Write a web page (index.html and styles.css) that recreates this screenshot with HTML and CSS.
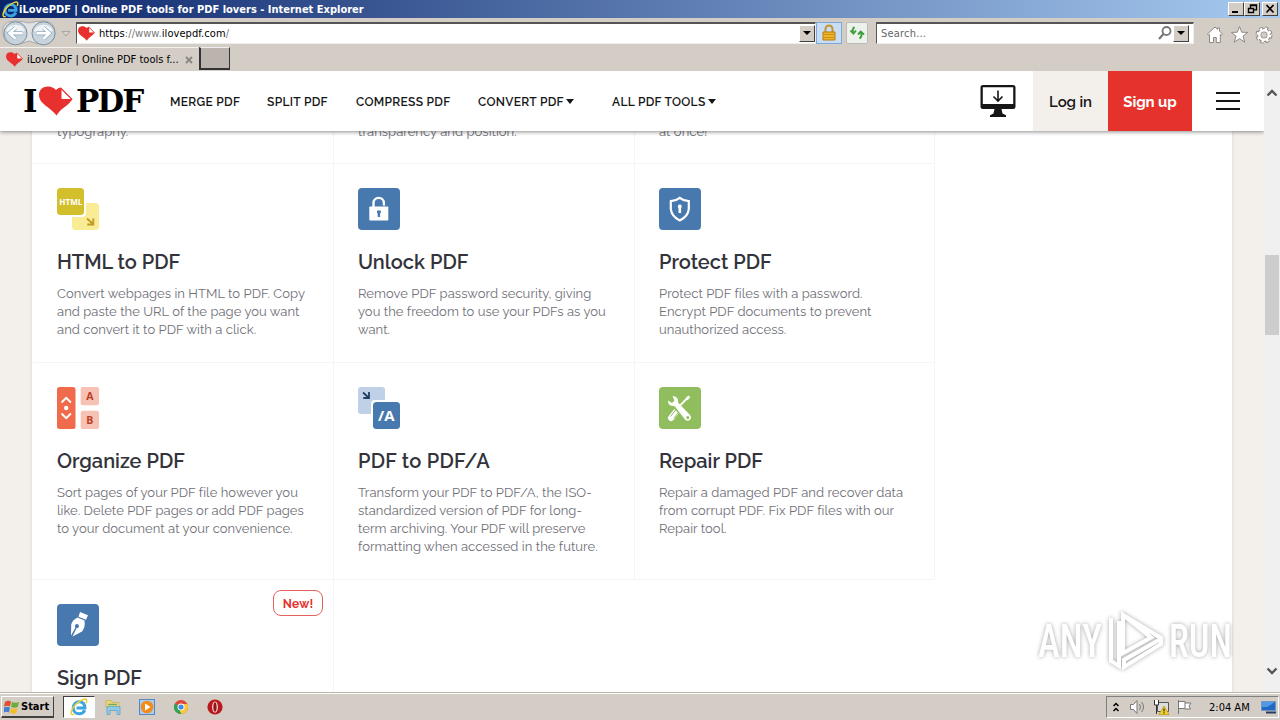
FILE: index.html
```html
<!DOCTYPE html>
<html lang="en">
<head>
<meta charset="UTF-8">
<title>iLovePDF | Online PDF tools for PDF lovers</title>
<link rel="stylesheet" href="styles.css">
</head>
<body>
<svg width="0" height="0" class="defs">
    <defs>
        <symbol id="ie" viewBox="0 0 18 18">
            <path d="M14.800 12.200C13.500 14.600 11.500 15.800 9.200 15.800c-3.600 0-6-2.600-6-6s2.700-6 6-6c3.700 0 5.800 2.600 5.700 6.200H6.500" fill="none" stroke="#3aa5e2" stroke-width="3"/>
            <path d="M4 16.300C-1 18 1 10.500 6 6S16.500-.5 16.700 2.500c.1 1-.3 2-.8 2.800" fill="none" stroke="#e9cf38" stroke-width="1.600"/>
        </symbol>
        <symbol id="heart" viewBox="0 0 34 30">
            <path d="M17.500 29.500C12 21.500 0 18 0 9 0 3.500 4 .5 9 .5c3.500 0 6 1.200 8 3.500 1.500-1.500 3-2.300 5-2.500L33.500 13c-3 6-11.500 9-16 16.500z" fill="#e8302e"/>
            <path d="M22 2.700v10.800h10.800z" fill="#fff" stroke="#e8302e" stroke-width="1"/>
        </symbol>
    </defs>
</svg>

<!-- Browser window -->
<div class="titlebar">
    <svg class="ie-icon"><use href="#ie"/></svg>
    <span class="win-title">iLovePDF | Online PDF tools for PDF lovers - Internet Explorer</span>
    <div class="win-btns">
        <span class="win-btn"><svg width="13" height="10"><path d="M2 8h6" stroke="#000" stroke-width="2"/></svg></span>
        <span class="win-btn"><svg width="13" height="10"><path d="M4.500 4V.9h6v5H8M4 1.500h7M2.500 4.500h5v4h-5zM2 4.500h6" fill="none" stroke="#000" stroke-width="1.400"/></svg></span>
        <span class="win-btn last"><svg width="13" height="10"><path d="M2.500 1l7 7.500M9.500 1l-7 7.500" stroke="#000" stroke-width="1.700"/></svg></span>
    </div>
</div>
<div class="toolbar">
    <svg class="history" width="74" height="29" viewBox="0 0 74 29">
        <path d="M3 9q3-6 12-6 7 0 14 2 7-2 14-2 12 0 12 12 0 11-12 11-7 0-14-3-7 3-14 3Q3 26 3 15z" fill="#dfe1e2" stroke="#a9aaab"/>
        <circle cx="15.500" cy="15.300" r="11.500" fill="#c7d4de" stroke="#818f9b"/>
        <circle cx="43.500" cy="15.300" r="11.500" fill="#c7d4de" stroke="#818f9b"/>
        <path d="M6 13a10 9 0 0 1 19 0q-9 4-19 0zM34 13a10 9 0 0 1 19 0q-9 4-19 0z" fill="#edf3f6"/>
        <path d="M22.500 15.300H9.500m6-5.500-6 5.500 6 5.500M36.500 15.300h13m-6-5.500 6 5.500-6 5.500" fill="none" stroke="#8fa9bd" stroke-width="4"/>
        <path d="M22.500 15.300H9.500m6-5.500-6 5.500 6 5.500M36.500 15.300h13m-6-5.500 6 5.500-6 5.500" fill="none" stroke="#fff" stroke-width="2.600"/>
        <path d="M62 13.500h8l-4 4.500z" fill="#d9d4cd" stroke="#aaa69f"/>
    </svg>
    <div class="address">
        <svg class="fav"><use href="#heart"/></svg>
        <span class="url">https<i>://www.</i>ilovepdf.com<i>/</i></span>
        <span class="drop"></span>
    </div>
    <span class="tool-btn lock">
        <svg width="18" height="18"><path d="M5.500 8V5a3.500 3.500 0 0 1 7 0v3" fill="none" stroke="#c89429" stroke-width="2"/><path d="M3 8h12v8H3z" fill="#f1b726" stroke="#b47b14"/><path d="M3.500 10.500h11M3.500 13.500h11" stroke="#c98c19"/></svg>
    </span>
    <span class="tool-btn refresh">
        <svg width="18" height="18"><path d="M6.500 3Q4 5 5 9M2.500 6.500l3 3 2.500-3M11.500 14.500q3-2 1.500-6M10 10.500l2.700-3 3.300 3" fill="none" stroke="#3c9d3b" stroke-width="1.900"/></svg>
    </span>
    <div class="search">
        <span>Search...</span>
        <svg width="16" height="16"><circle cx="9.500" cy="6" r="4" fill="none" stroke="#777" stroke-width="1.800"/><path d="M6.500 9l-4.500 5" stroke="#777" stroke-width="2.200"/></svg>
        <span class="drop"></span>
    </div>
    <svg class="ie-tools" width="70" height="22" viewBox="0 0 70 22" fill="#fff" stroke="#8d8983" stroke-width="1">
        <path d="M1.500 10 9 3l2.500 2.300V4h2v3.200l3 2.800-1.200 1.200-1-.7v8h-4v-5H7.500v5h-4v-8l-1 .8z"/>
        <path d="M33.500 2.500l2.200 5.700 6 .2-4.700 3.700 1.700 6-5.200-3.400-5.200 3.400 1.700-6-4.700-3.700 6-.2z"/>
        <circle cx="58" cy="11" r="6.500" fill="none" stroke="#8d8983" stroke-width="4" stroke-dasharray="3.100 2"/>
        <circle cx="58" cy="11" r="4.800" fill="none" stroke="#8d8983" stroke-width="4.200"/>
        <circle cx="58" cy="11" r="6.300" fill="none" stroke="#fff" stroke-width="2.400" stroke-dasharray="2.300 2.650"/>
        <circle cx="58" cy="11" r="4.700" fill="none" stroke="#fff" stroke-width="2.400"/>
    </svg>
</div>
<div class="tabs">
    <div class="tab">
        <svg class="fav"><use href="#heart"/></svg>
        <span>iLovePDF | Online PDF tools f...</span>
        <svg class="tab-x" width="8" height="8"><path d="M1 1l6 6M7 1L1 7" stroke="#8a8681" stroke-width="1.800"/></svg>
    </div>
    <span class="new-tab"></span>
</div>

<!-- Web page -->
<div class="viewport">
    <div class="page">
        <header class="header">
            <div class="brand">
                <b>I</b><svg class="brand-heart"><use href="#heart"/></svg><b class="pdf">PDF</b>
            </div>
            <nav class="menu">
                <a class="m1">MERGE PDF</a>
                <a class="m2">SPLIT PDF</a>
                <a class="m3">COMPRESS PDF</a>
                <a class="m4">CONVERT PDF <i class="caret"></i></a>
                <a class="m5">ALL PDF TOOLS <i class="caret"></i></a>
            </nav>
            <svg class="desktop" width="36" height="34" viewBox="0 0 36 34">
                <path d="M3 1h30q2.500 0 2.500 2.500v19Q35.500 25 33 25H3Q.5 25 .5 22.500v-19Q.5 1 3 1zM2.800 3.200V20h30.400V3.200z" fill="#161616" fill-rule="evenodd"/>
                <path d="M14.500 25h7l1 4.500 3.500 1.800V33H10v-1.700l3.500-1.800z" fill="#161616"/>
                <path d="M18 6.500v10.500m-4.500-4.500 4.500 4.500 4.500-4.500" fill="none" stroke="#161616" stroke-width="1.600"/>
            </svg>
            <a class="login">Log in</a>
            <a class="signup">Sign up</a>
            <svg class="burger" width="24" height="20"><path d="M0 2h24M0 10h24M0 18h24" stroke="#161616" stroke-width="2"/></svg>
        </header>
        <main class="tools">
            <div class="card cut"><p>typography.</p></div>
            <div class="card cut"><p>transparency and position.</p></div>
            <div class="card cut"><p>at once!</p></div>

            <div class="card">
                <svg class="icon" viewBox="0 0 42 42">
                    <rect x="15" y="15" width="27" height="27" rx="3.500" fill="#f9ec94"/>
                    <rect x="-2" y="-2" width="31" height="31" rx="4" fill="#fff"/>
                    <rect width="27" height="27" rx="3.500" fill="#d3bf2c"/>
                    <text x="2.300" y="16.500" textLength="23" lengthAdjust="spacingAndGlyphs" font-size="8" fill="#fff">HTML</text>
                    <path d="M30 30.500l6 5.500m.3-5.500v6h-6" fill="none" stroke="#c19a22" stroke-width="1.800"/>
                </svg>
                <h3>HTML to PDF</h3>
                <p>Convert webpages in HTML to PDF. Copy<br>and paste the URL of the page you want<br>and convert it to PDF with a click.</p>
            </div>
            <div class="card">
                <svg class="icon" viewBox="0 0 42 42">
                    <rect width="42" height="42" rx="4" fill="#4879ae"/>
                    <path d="M15.500 20v-5a5.200 5.200 0 0 1 10.400 0v2.500" fill="none" stroke="#fff" stroke-width="2.300"/>
                    <rect x="11.300" y="18.500" width="19" height="14" rx=".8" fill="#fff"/>
                    <path d="M19 22.500h3.800v2.700h-.7v3.800h-2.400v-3.800h-.7z" fill="#4879ae"/>
                </svg>
                <h3>Unlock PDF</h3>
                <p>Remove PDF password security, giving<br>you the freedom to use your PDFs as you<br>want.</p>
            </div>
            <div class="card">
                <svg class="icon" viewBox="0 0 42 42">
                    <rect width="42" height="42" rx="4" fill="#4879ae"/>
                    <path d="M20.800 9.800q4 3.200 9 3.400v8q-.8 7.500-9 11.200-8.200-3.700-9-11.200v-8q5-.2 9-3.400z" fill="none" stroke="#fff" stroke-width="2.200"/>
                    <path d="M20.800 16.500a2 2 0 0 1 1.300 3.500v5h-2.600v-5a2 2 0 0 1 1.300-3.500z" fill="#fff"/>
                </svg>
                <h3>Protect PDF</h3>
                <p>Protect PDF files with a password.<br>Encrypt PDF documents to prevent<br>unauthorized access.</p>
            </div>

            <div class="card">
                <svg class="icon" viewBox="0 0 42 42">
                    <rect width="18.500" height="42" rx="2.500" fill="#f06b4c"/>
                    <path d="M4.500 15.500l4.700-4.700 4.700 4.700M4.500 26.500l4.700 4.700 4.700-4.700" fill="none" stroke="#fff" stroke-width="1.900"/>
                    <circle cx="9.200" cy="21" r="2.200" fill="#fff"/>
                    <rect x="23.700" width="18.300" height="18.300" rx="2" fill="#f7c2b3"/>
                    <rect x="23.700" y="23.700" width="18.300" height="18.300" rx="2" fill="#f7c2b3"/>
                    <text x="32.800" y="13" text-anchor="middle" font-size="10.500" fill="#bd3d27">A</text>
                    <text x="32.800" y="36.500" text-anchor="middle" font-size="10.500" fill="#bd3d27">B</text>
                </svg>
                <h3>Organize PDF</h3>
                <p>Sort pages of your PDF file however you<br>like. Delete PDF pages or add PDF pages<br>to your document at your convenience.</p>
            </div>
            <div class="card">
                <svg class="icon" viewBox="0 0 42 42">
                    <rect width="27" height="27" rx="3" fill="#c0d0e6"/>
                    <path d="M5 5.500l5.500 5M11 5v6H5.300" fill="none" stroke="#203f68" stroke-width="1.800"/>
                    <rect x="13" y="13" width="31" height="31" rx="4" fill="#fff"/>
                    <rect x="15" y="15" width="27" height="27" rx="3.500" fill="#4879ae"/>
                    <text x="20" y="34" textLength="16.500" lengthAdjust="spacingAndGlyphs" font-size="15" fill="#fff">/A</text>
                </svg>
                <h3 class="wide">PDF to PDF/A</h3>
                <p>Transform your PDF to PDF/A, the ISO-<br>standardized version of PDF for long-<br>term archiving. Your PDF will preserve<br>formatting when accessed in the future.</p>
            </div>
            <div class="card">
                <svg class="icon" viewBox="0 0 42 42">
                    <rect width="42" height="42" rx="4" fill="#90bd5d"/>
                    <path d="M21 18.500l7.500-7.500" stroke="#fff" stroke-width="1.800"/>
                    <path d="M26.500 11l3-2.500 1.700 1.700-2.500 3z" fill="#fff"/>
                    <path d="M19 22.500l-7 8.500" stroke="#fff" stroke-width="6" stroke-linecap="round"/>
                    <path d="M17 22.500l-5.500 7M20 25l-5 6" stroke="#90bd5d" stroke-width="1"/>
                    <path d="M14 15.500l15 15.500" stroke="#90bd5d" stroke-width="7"/>
                    <path d="M13.500 9q6 0 5.500 6.500l12 12.500q2 2.800 0 4.800t-4.800 0L15.500 19Q9 19.500 9 13.500l4 2.500 2.500-2.500z" fill="#fff"/>
                    <circle cx="28.800" cy="30.500" r="1.500" fill="#90bd5d"/>
                </svg>
                <h3>Repair PDF</h3>
                <p>Repair a damaged PDF and recover data<br>from corrupt PDF. Fix PDF files with our<br>Repair tool.</p>
            </div>

            <div class="card">
                <span class="badge">New!</span>
                <svg class="icon" viewBox="0 0 42 42">
                    <rect width="42" height="42" rx="4" fill="#4879ae"/>
                    <path d="M23 8l8 3.200-2 4.500-7.500-3zM20.500 13.500l7 3q1 7-2.500 11l-9.500 5 4.200-8.500a2 2 0 1 0-1.200-.6L14 31.500l.2-11q1-4.500 6.300-7z" fill="#fff"/>
                </svg>
                <h3>Sign PDF</h3>
            </div>
            <div class="card none"></div>
            <div class="card none"></div>
        </main>
    </div>
    <div class="scrollbar">
        <svg width="16" height="16"><path d="M3.500 10.500L8 6l4.500 4.500" fill="none" stroke="#555" stroke-width="2.300"/></svg>
        <span class="thumb"></span>
        <svg class="down" width="16" height="16"><path d="M3.500 5.500L8 10l4.500-4.500" fill="none" stroke="#555" stroke-width="2.300"/></svg>
    </div>
    <svg class="watermark" width="240" height="76" viewBox="0 0 240 76">
        <g class="wm">
            <text x="5" y="50" textLength="64" lengthAdjust="spacingAndGlyphs">ANY</text>
            <text x="136" y="50" textLength="63" lengthAdjust="spacingAndGlyphs">RUN</text>
            <g fill="none" stroke="#fff" stroke-width="4">
                <path d="M78 11v43l8 5V14"/>
                <path d="M90 8v38l28-15.500zM90 8l38 23v6L91 60v-7l35-20"/>
            </g>
        </g>
    </svg>
</div>

<div class="taskbar">
    <div class="start">
        <svg width="17" height="16"><path d="M1 3q3-2 6-.5L6 7.500Q3 6 0 7.500z" fill="#e34d30"/><path d="M8 3q4 1.500 7 0l-1.200 5q-3 1.500-6.800 0z" fill="#70ac3b"/><path d="M0 8.500q3-1.500 6 0L5 13.500q-3-1.500-5 0z" fill="#4180d2"/><path d="M7 9q3 1.500 6.500 0l-1.200 5q-3 1.500-6.300 0z" fill="#f2bd29"/></svg>
        <b>Start</b>
    </div>
    <div class="task active"><svg width="18" height="18"><use href="#ie"/></svg></div>
    <svg class="task-icon" width="18" height="18"><path d="M2 2.500h5l1 2h7v5H2z" fill="#f0d77b" stroke="#c7a94e" stroke-width=".7"/><path d="M3 8.500h13v8h-3v-4H6v4H3z" fill="#8ccbe6" stroke="#5b9dbd" stroke-width=".7"/><path d="M4 6.500h9" stroke="#6cad65" stroke-width="1.500"/></svg>
    <svg class="task-icon" width="18" height="18"><rect x="1.500" y="1.500" width="15" height="15" fill="#a8cff0" stroke="#5687c7"/><circle cx="9" cy="9" r="6.300" fill="#f18b1c"/><path d="M7 5.500l5.500 3.500L7 12.500z" fill="#fff"/></svg>
    <svg class="task-icon" width="18" height="18"><circle cx="9" cy="9" r="7" fill="#e04636"/><path d="M9 9L2.900 5.500A7 7 0 0 0 9 16z" fill="#31a354"/><path d="M9 9h7a7 7 0 0 1-7 7z" fill="#f7cb36"/><path d="M9 6h6.500l.5 3-5 6-3-1z" fill="#f7cb36"/><circle cx="9" cy="9" r="3.500" fill="#fff"/><circle cx="9" cy="9" r="2.600" fill="#4688ed"/></svg>
    <svg class="task-icon" width="18" height="18"><circle cx="9" cy="9" r="7.600" fill="#b9191d"/><ellipse cx="9" cy="9" rx="2.800" ry="5.600" fill="#fff"/><ellipse cx="9" cy="9" rx="1.700" ry="4.700" fill="#9c1115"/></svg>
    <div class="tray">
        <svg width="8" height="12"><path d="M1.500 5L4 2.500 6.500 5M1.500 10L4 7.500 6.500 10" fill="none" stroke="#000" stroke-width="1.500"/></svg>
        <svg class="snd" width="17" height="16"><path d="M1.500 5.500h3L8 1.500v13l-3.500-4h-3z" fill="#fff" stroke="#777"/><path d="M10.500 5q2 3 0 6M12.500 3q4 5 0 10" fill="none" stroke="#777"/></svg>
        <svg class="net" width="17" height="16"><path d="M4.500 3.500h11v9h-11z" fill="#ddd" stroke="#555"/><path d="M1.500 1v5h4V1M3.500 6v9" fill="#fff" stroke="#333"/><path d="M11 7l5 8.500H6z" fill="#f6d32b" stroke="#c09a12" stroke-width=".8"/><path d="M11 9.500v3M11 13.300v1.200" stroke="#222" stroke-width="1.200"/></svg>
        <svg class="flag" width="17" height="16"><path d="M2.500 1v14M3 2.500h6v7H3M9 4h6l-2 3 1.500 3H9" fill="#fff" stroke="#777"/></svg>
        <span class="clock">2:04 AM</span>
        <svg class="show" width="16" height="14"><path d="M.5 1.500h14v9H.5z" fill="#2369c4" stroke="#6f96c3"/><path d="M1 2h13L6 7H1z" fill="#5199e4"/><path d="M5 12.500h10" stroke="#273c60" stroke-width="2"/></svg>
    </div>
</div>
</body>
</html>
```
FILE: styles.css
```css
* {
    box-sizing: border-box;
}
body {
    margin: 0;
    width: 1280px;
    height: 720px;
    overflow: hidden;
    display: flex;
    flex-direction: column;
    background: #d4cdc5;
    font-family: "DejaVu Sans Condensed", "DejaVu Sans", sans-serif;
    font-stretch: condensed;
    font-size: 11px;
    color: #000;
}
svg {
    display: block;
    flex: none;
}
.defs {
    position: absolute;
}
i {
    font-style: normal;
}

/* window */
.titlebar {
    height: 18px;
    flex: none;
    display: flex;
    align-items: center;
    background: linear-gradient(to right, #0b256b, #a6caf0);
}
.ie-icon {
    width: 17px;
    height: 17px;
    margin-left: 2px;
}
.win-title {
    color: #fff;
    font-weight: bold;
    font-size: 11px;
    white-space: nowrap;
}
.win-btns {
    display: flex;
    margin-left: auto;
    margin-right: 2px;
}
.win-btn {
    width: 16px;
    height: 14px;
    padding: 1px;
    background: #d4cdc5;
    border: 1px solid;
    border-color: #fff #404040 #404040 #fff;
}
.win-btn.last {
    margin-left: 2px;
}
.toolbar {
    height: 29px;
    flex: none;
    display: flex;
    align-items: center;
}
.address, .search {
    display: flex;
    align-items: center;
    height: 22px;
    background: #fff;
    border: 1px solid;
    border-color: #555 #eee #eee #555;
    border-top-width: 2px;
}
.address {
    width: 740px;
    margin-left: 2px;
}
.fav {
    width: 17px;
    height: 15px;
}
.address .fav {
    margin-left: 1px;
}
.url {
    margin-left: 4px;
    letter-spacing: 0.07px;
}
.url i {
    color: #777;
}
.drop {
    width: 16px;
    height: 17px;
    margin-left: auto;
    background: #d4cdc5;
    border: 1px solid;
    border-color: #fff #404040 #404040 #fff;
    display: flex;
    align-items: center;
    justify-content: center;
}
.drop::after {
    content: "";
    border: 4px solid transparent;
    border-top-color: #000;
    border-bottom: 0;
}
.tool-btn {
    width: 26px;
    height: 22px;
    display: flex;
    align-items: center;
    justify-content: center;
    border: 1px solid #7da7d8;
    background: #c9def5;
}
.refresh {
    width: 22px;
    margin-left: 4px;
    border-color: #bbb;
    background: #edf1ec;
    border-radius: 2px;
}
.search {
    width: 318px;
    margin-left: 8px;
    padding-left: 4px;
    color: #666;
    letter-spacing: 0.2px;
}
.search svg {
    margin-left: auto;
}
.search .drop {
    margin-left: 0;
    margin-right: 4px;
}
.ie-tools {
    margin-left: 12px;
    margin-top: 5px;
}
.tabs {
    height: 24px;
    flex: none;
    display: flex;
    align-items: flex-start;
}
.tab {
    width: 198px;
    height: 24px;
    padding-left: 6px;
    display: flex;
    align-items: center;
    border-top: 1px solid #f4f2ee;
    white-space: nowrap;
}
.tab span {
    margin-left: 4px;
}
.tab-x {
    margin-left: 6px;
}
.new-tab {
    width: 31px;
    height: 23px;
    background: #bbb3ad;
    border: solid #333;
    border-width: 1px 1px 2px 2px;
    border-top-color: #eee;
    margin-left: 1px;
}

/* page */
.viewport {
    position: relative;
    height: 621px;
    flex: none;
    display: flex;
    overflow: hidden;
}
.page {
    width: 1264px;
    height: 621px;
    overflow: hidden;
    background: #f3f0ec;
    font-family: Raleway, Lato, sans-serif;
    font-stretch: normal;
}
.header {
    position: relative;
    z-index: 2;
    height: 60px;
    display: flex;
    align-items: center;
    background: #fff;
    box-shadow: 0 1px 4px rgba(0, 0, 0, 0.45);
    color: #161616;
}
.brand {
    width: 122px;
    margin-left: 24px;
    display: flex;
    align-items: center;
    font-family: "DejaVu Serif", serif;
    font-size: 31px;
    line-height: 60px;
    letter-spacing: -2px;
    color: #000;
}
.brand b {
    width: 16px;
    margin-left: -1px;
}
.brand b.pdf {
    width: auto;
    margin-left: 3px;
}
.brand-heart {
    width: 34px;
    height: 30px;
}
.menu {
    display: flex;
    width: 834px;
    margin-left: 24px;
    margin-top: 2px;
    font-size: 12px;
    font-weight: 600;
    white-space: nowrap;
    letter-spacing: 0.3px;
}
.m1 { width: 97px; }
.m2 { width: 89px; }
.m3 { width: 122px; }
.m4 { width: 134px; }
.caret {
    display: inline-block;
    vertical-align: 2px;
    margin-left: -1px;
    border: 4.5px solid transparent;
    border-top: 5px solid #161616;
    border-bottom: 0;
}
.desktop {
    margin-left: -24px;
}
.login, .signup {
    height: 60px;
    line-height: 62px;
    text-align: center;
    font-size: 15px;
    font-weight: 600;
    letter-spacing: -0.1px;
}
.login {
    width: 75px;
    margin-left: 17px;
    background: #f3f0ec;
}
.signup {
    width: 84px;
    background: #e5322d;
    color: #fff;
    font-weight: bold;
}
.burger {
    margin-left: 24px;
}
.tools {
    width: 1200px;
    height: 561px;
    margin: 0 auto;
    padding-left: 1px;
    background: #fff;
    box-shadow: 0 0 3px rgba(0, 0, 0, 0.12);
    display: grid;
    grid-template-columns: 301px 301px 300px;
    align-content: start;
}
.card {
    position: relative;
    padding: 24px 0 23px 24px;
    border-right: 1px solid #f5f5f6;
    border-bottom: 1px solid #f5f5f6;
}
.card.cut {
    padding-top: 0;
    padding-bottom: 22px;
}
.card.cut p {
    margin-top: -8px;
}
.card.none {
    border: 0;
}
.icon {
    width: 42px;
    height: 42px;
    font-family: "Open Sans", sans-serif;
    font-weight: bold;
}
.card h3 {
    margin: 20px 0 0;
    font-size: 20px;
    line-height: 24px;
    font-weight: 600;
    color: #33333b;
    white-space: nowrap;
}
.card h3.wide {
    letter-spacing: 0.25px;
}
.card p {
    margin: 11px 0 0;
    font-size: 13px;
    line-height: 18px;
    letter-spacing: 0.05px;
    color: #707078;
    white-space: nowrap;
}
.badge {
    position: absolute;
    top: 10px;
    right: 10px;
    width: 50px;
    height: 26px;
    border: 1px solid #e5615e;
    border-radius: 8px;
    color: #e5322d;
    font-size: 12px;
    font-weight: bold;
    letter-spacing: 0.2px;
    line-height: 26px;
    text-align: center;
}
.scrollbar {
    width: 16px;
    padding-top: 14px;
    background: #f0f0f0;
    display: flex;
    flex-direction: column;
    align-items: center;
}
.thumb {
    width: 14px;
    height: 80px;
    margin-top: 154px;
    background: #cdcdcd;
}
.down {
    margin-top: auto;
    margin-bottom: 13px;
}
.watermark {
    position: absolute;
    left: 1033px;
    top: 536px;
    z-index: 3;
}
.wm {
    font-family: Roboto, sans-serif;
    font-size: 47px;
    font-weight: 500;
    fill: #fff;
    filter: drop-shadow(0 0 2px rgba(0, 0, 0, 0.35));
}

/* taskbar */
.taskbar {
    height: 28px;
    flex: none;
    display: flex;
    align-items: center;
    background: #d4cdc5;
    border-top: 1px solid #bbb5ad;
    box-shadow: inset 0 1px #fff;
    padding: 1px 1px 0;
}
.start {
    width: 53px;
    height: 22px;
    padding-left: 2px;
    display: flex;
    align-items: center;
    border: 1px solid;
    border-color: #fff #404040 #404040 #fff;
    border-bottom-width: 2px;
}
.task {
    width: 32px;
    height: 22px;
    margin-left: 9px;
    margin-right: 9px;
    display: flex;
    align-items: center;
    justify-content: center;
    background: #fff;
    border: 1px solid;
    border-color: #404040 #fff #fff #404040;
}
.task-icon {
    margin-right: 16px;
}
.tray {
    width: 173px;
    height: 22px;
    margin-left: auto;
    padding-left: 5px;
    display: flex;
    align-items: center;
    border: 1px solid;
    border-color: #808080 #fff #fff #808080;
    white-space: nowrap;
}
.snd { margin-left: 9px; }
.net { margin-left: 7px; }
.flag { margin-left: 6px; }
.clock { margin-left: 16px; }
.show { margin-left: auto; margin-right: 1px; }
```
